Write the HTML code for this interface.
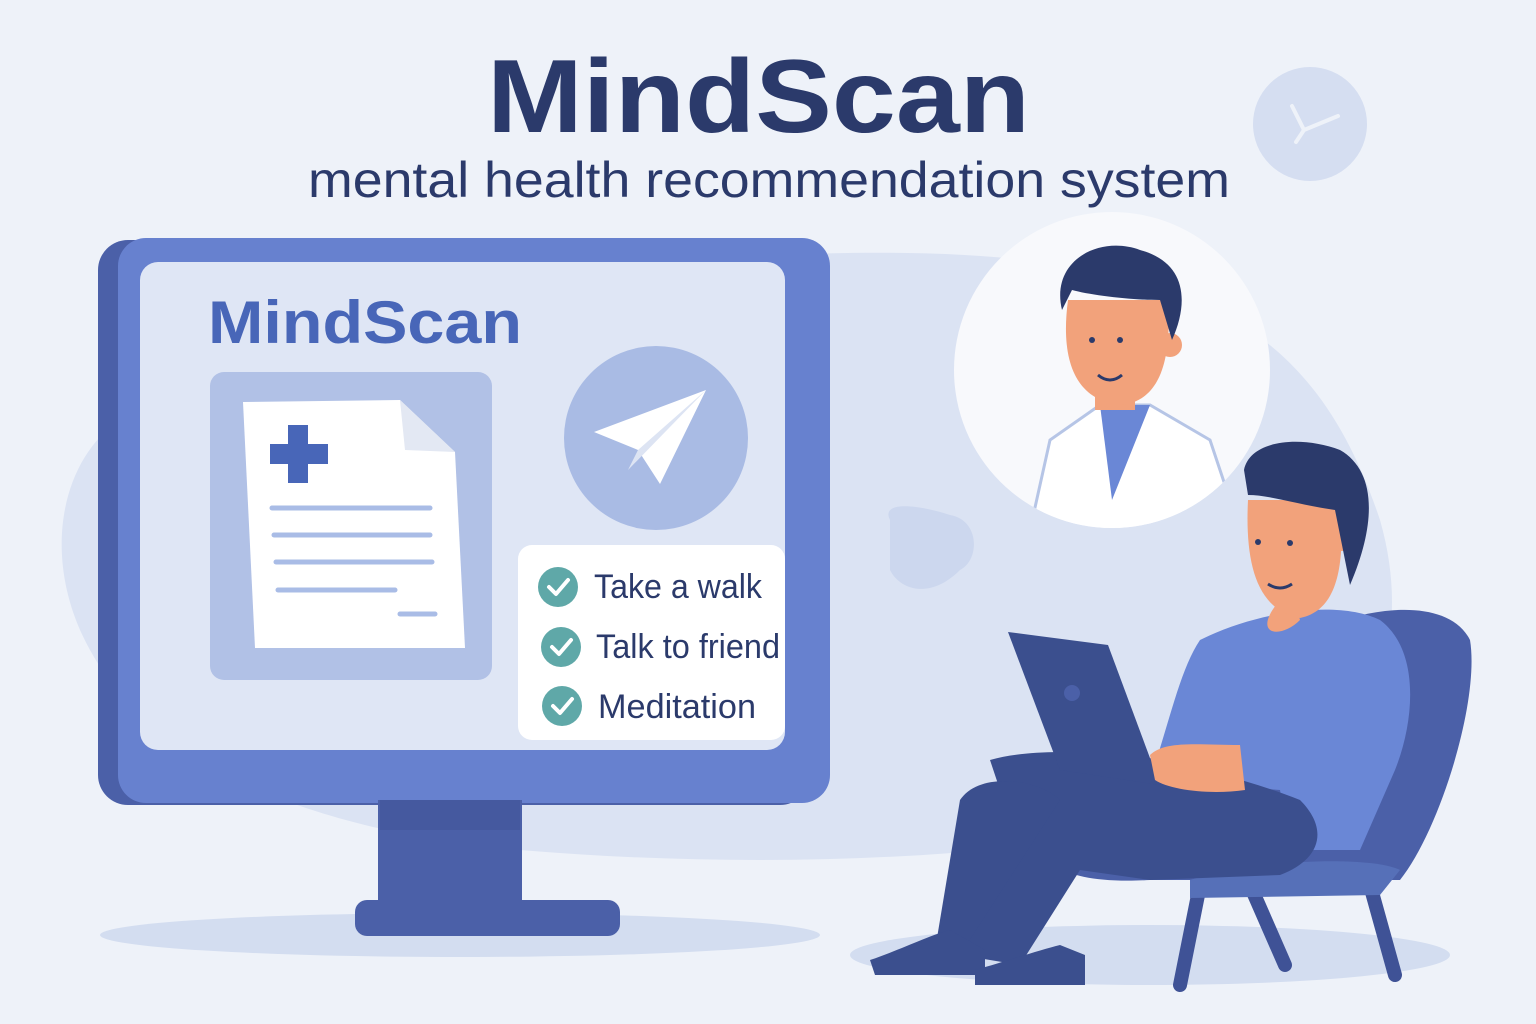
<!DOCTYPE html>
<html><head><meta charset="utf-8"><style>
html,body{margin:0;padding:0;background:#eef2f9;}
svg{display:block}
text{font-family:"Liberation Sans",sans-serif}
</style></head><body>
<svg width="1536" height="1024" viewBox="0 0 1536 1024" xmlns="http://www.w3.org/2000/svg">
<rect width="1536" height="1024" fill="#eef2f9"/>
<path d="M120 420 C60 460 40 560 90 650 C150 760 300 830 520 850 C760 870 1000 860 1200 820 C1360 790 1420 660 1380 520 C1340 400 1280 330 1170 290 C1050 250 900 250 780 255 C560 262 260 330 120 420 Z" fill="#dbe3f3"/>
<ellipse cx="460" cy="935" rx="360" ry="22" fill="#d3ddf0"/>
<ellipse cx="1150" cy="955" rx="300" ry="30" fill="#d3ddf0"/>
<text x="487" y="132" textLength="543" lengthAdjust="spacingAndGlyphs" font-size="104" font-weight="bold" fill="#2b3a6b">MindScan</text>
<text x="308" y="197" textLength="922" lengthAdjust="spacingAndGlyphs" font-size="50" fill="#2b3a6b">mental health recommendation system</text>
<circle cx="1310" cy="124" r="57" fill="#d5def1"/>
<path d="M1292 106 L1304 130 M1304 130 L1296 142 M1304 130 L1338 116" stroke="#eef2f9" stroke-width="4" fill="none" stroke-linecap="round"/>
<rect x="98" y="240" width="712" height="565" rx="30" fill="#4b60a8"/>
<rect x="118" y="238" width="712" height="565" rx="28" fill="#6781cf"/>
<rect x="140" y="262" width="645" height="488" rx="18" fill="#dfe6f5"/>
<path d="M378 800 L522 800 L522 905 L378 905 Z" fill="#4b60a8"/>
<rect x="355" y="900" width="265" height="36" rx="12" fill="#4b60a8"/>
<rect x="380" y="800" width="140" height="30" fill="#3f5296" opacity="0.5"/>
<text x="208" y="343" textLength="314" lengthAdjust="spacingAndGlyphs" font-size="60" font-weight="bold" fill="#4866b8">MindScan</text>
<rect x="210" y="372" width="282" height="308" rx="14" fill="#b1c1e6"/>
<path d="M243 402 L400 400 L455 452 L465 648 L255 648 Z" fill="#ffffff"/>
<path d="M400 400 L405 450 L455 452 Z" fill="#e3e8f3"/>
<rect x="288" y="425" width="20" height="58" fill="#4866b8"/>
<rect x="270" y="444" width="58" height="20" fill="#4866b8"/>
<g stroke="#a9bce6" stroke-width="5" stroke-linecap="round">
<line x1="272" y1="508" x2="430" y2="508"/>
<line x1="274" y1="535" x2="430" y2="535"/>
<line x1="276" y1="562" x2="432" y2="562"/>
<line x1="278" y1="590" x2="395" y2="590"/>
<line x1="400" y1="614" x2="435" y2="614"/>
</g>
<circle cx="656" cy="438" r="92" fill="#a9bbe4"/>
<path d="M594 432 L706 390 L660 484 L638 450 Z" fill="#ffffff"/>
<path d="M638 450 L706 390 L628 470 Z" fill="#dde4f3"/>
<rect x="518" y="545" width="267" height="195" rx="14" fill="#ffffff"/>
<g fill="#5fa8a8"><circle cx="558" cy="587" r="20"/><circle cx="561" cy="647" r="20"/><circle cx="562" cy="706" r="20"/></g>
<g stroke="#fff" stroke-width="4" fill="none" stroke-linecap="round" stroke-linejoin="round">
<path d="M549 587 L556 594 L568 580"/><path d="M552 647 L559 654 L571 640"/><path d="M553 706 L560 713 L572 699"/></g>
<g font-size="34" fill="#2b3a6b">
<text x="594" y="598" textLength="168" lengthAdjust="spacingAndGlyphs">Take a walk</text>
<text x="596" y="658" textLength="184" lengthAdjust="spacingAndGlyphs">Talk to friend</text>
<text x="598" y="718" textLength="158" lengthAdjust="spacingAndGlyphs">Meditation</text>
</g>
<circle cx="1112" cy="370" r="158" fill="#f8f9fc"/>
<clipPath id="c"><circle cx="1112" cy="370" r="158"/></clipPath>
<g clip-path="url(#c)">
<path d="M1030 530 L1050 440 L1100 405 L1150 405 L1210 440 L1240 530 Z" fill="#fff" stroke="#b6c5e6" stroke-width="3"/>
<path d="M1100 405 L1112 500 L1150 405 Z" fill="#6a87d6"/>
<rect x="1095" y="370" width="40" height="40" fill="#f2a27b"/>
</g>
<path d="M1068 300 C1060 360 1075 400 1120 405 C1160 402 1172 360 1168 300 Z" fill="#f2a27b"/>
<circle cx="1170" cy="345" r="12" fill="#f2a27b"/>
<path d="M1062 310 C1050 260 1100 235 1140 250 C1185 262 1190 300 1172 340 L1160 300 C1130 300 1090 295 1072 290 Z" fill="#2b3a6b"/>
<circle cx="1092" cy="340" r="3" fill="#2b3a6b"/><circle cx="1120" cy="340" r="3" fill="#2b3a6b"/>
<path d="M1098 375 Q1110 385 1122 375" stroke="#2b3a6b" stroke-width="3" fill="none"/>
<path d="M890 520 C880 500 920 505 950 515 C980 520 980 560 960 570 C930 600 900 590 890 570 Z" fill="#ccd7ee"/>
<path d="M1330 625 C1380 605 1450 600 1470 640 C1480 700 1440 830 1400 880 L1150 880 C1060 885 1040 860 1040 840 Z" fill="#4b60a8"/>
<path d="M1200 885 L1180 985 M1250 885 L1285 965 M1370 885 L1395 975" stroke="#3f5296" stroke-width="14" stroke-linecap="round"/>
<path d="M1190 880 C1250 860 1370 855 1400 870 L1380 895 L1190 898 Z" fill="#5670b8"/>
<path d="M1200 640 C1260 610 1340 600 1380 620 C1420 650 1415 720 1395 770 L1360 850 L1290 850 L1280 790 L1150 780 C1170 720 1180 670 1200 640 Z" fill="#6a87d6"/>
<path d="M990 760 C1060 740 1200 760 1300 800 C1330 830 1320 860 1280 875 L1150 880 L1080 870 L1020 965 L960 955 L1010 820 Z" fill="#3b4f8e"/>
<path d="M960 800 C980 770 1040 780 1060 800 L960 955 L935 950 Z" fill="#3b4f8e"/>
<path d="M870 960 C900 950 930 935 950 930 L985 950 L985 975 L875 975 Z" fill="#3b4f8e"/>
<path d="M975 970 C1010 960 1040 950 1060 945 L1085 955 L1085 985 L975 985 Z" fill="#3b4f8e"/>
<path d="M1008 632 L1108 645 L1160 785 L1060 770 Z" fill="#3b4f8e"/>
<circle cx="1072" cy="693" r="8" fill="#4b60a8"/>
<path d="M1150 755 C1165 740 1200 745 1240 745 L1245 790 C1210 795 1170 790 1155 780 Z" fill="#f2a27b"/>
<path d="M1280 545 L1300 620 C1280 640 1250 635 1280 600 Z" fill="#f2a27b"/>
<path d="M1248 500 C1245 560 1255 610 1300 618 C1340 610 1345 560 1340 500 Z" fill="#f2a27b"/>
<circle cx="1342" cy="538" r="13" fill="#f2a27b"/>
<path d="M1244 470 C1250 440 1300 435 1340 450 C1375 470 1378 520 1350 585 L1335 510 C1300 505 1270 495 1248 495 Z" fill="#2b3a6b"/>
<circle cx="1258" cy="542" r="3" fill="#2b3a6b"/><circle cx="1290" cy="543" r="3" fill="#2b3a6b"/>
<path d="M1268 584 Q1280 592 1292 584" stroke="#2b3a6b" stroke-width="3" fill="none"/>
</svg>
</body></html>
